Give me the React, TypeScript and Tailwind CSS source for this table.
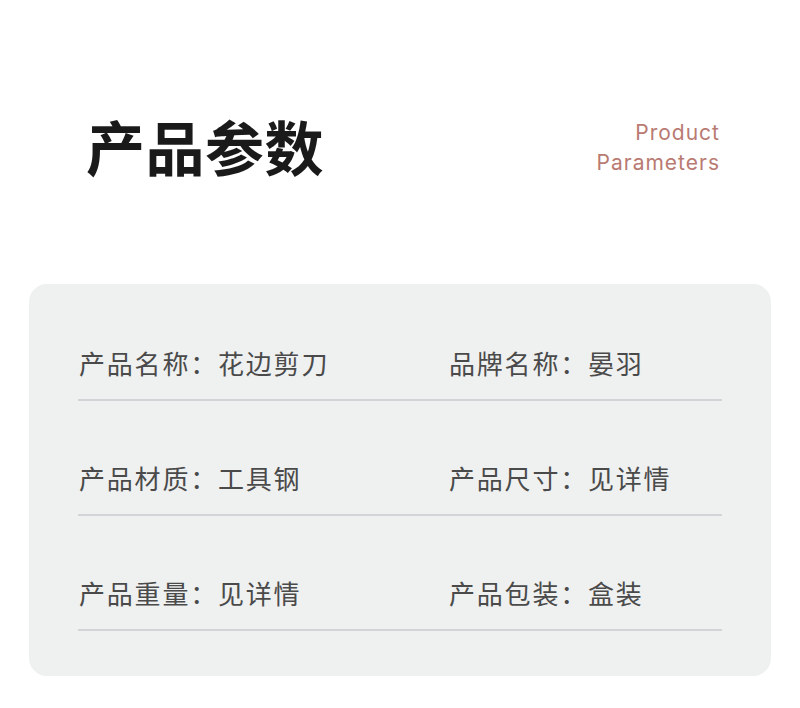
const specs = [
  [
    { label: '产品名称', value: '花边剪刀' },
    { label: '品牌名称', value: '晏羽' },
  ],
  [
    { label: '产品材质', value: '工具钢' },
    { label: '产品尺寸', value: '见详情' },
  ],
  [
    { label: '产品重量', value: '见详情' },
    { label: '产品包装', value: '盒装' },
  ],
];

const cjk = "font-['Noto_Sans_CJK_SC','Noto_Sans',sans-serif]";

export default function App() {
  return (
    <div className={`w-[800px] h-[708px] bg-white ${cjk}`}>
      {/* Header */}
      <div className="h-[284px] flex justify-between items-start pl-[86px] pr-[80px] pt-[116px]">
        <h1 className="text-[59px] leading-[60px] tracking-[0.5px] font-bold text-[#1a1a1a]">产品参数</h1>
        <div className="mt-[2px] text-right text-[21px] leading-[30px] tracking-[1px] text-[#b97a72] font-['Inter',sans-serif]">
          <div>Product</div>
          <div>Parameters</div>
        </div>
      </div>

      {/* Spec card */}
      <div className="ml-[29px] w-[742px] h-[392px] rounded-[18px] bg-[#eff0f0] px-[49px] pt-[2px]">
        {specs.map((row, i) => (
          <div
            key={i}
            className="grid grid-cols-[370px_1fr] pt-[57px] pb-[16px] border-b-2 border-[#d3d4d7]"
          >
            {row.map((item) => (
              <div key={item.label} className="text-[26px] leading-[40px] tracking-[1.8px] text-[#4a4a4a] pl-[1px]">
                {item.label}：{item.value}
              </div>
            ))}
          </div>
        ))}
      </div>
    </div>
  );
}
